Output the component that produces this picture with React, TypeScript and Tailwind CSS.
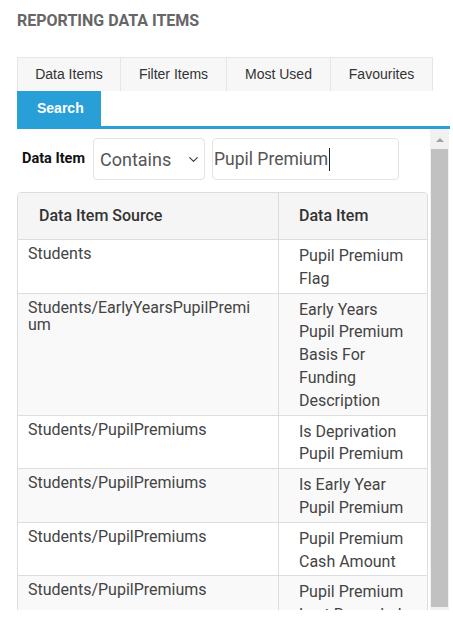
import { ChevronDown } from 'lucide-react'

const tabs = [
  { label: 'Data Items', w: 'w-[104px]' },
  { label: 'Filter Items', w: 'w-[106px]' },
  { label: 'Most Used', w: 'w-[104px]' },
  { label: 'Favourites', w: 'w-[102px]' },
]

const rows = [
  { source: 'Students', item: ['Pupil Premium', 'Flag'] },
  {
    source: 'Students/EarlyYearsPupilPremium',
    item: ['Early Years', 'Pupil Premium', 'Basis For', 'Funding', 'Description'],
  },
  { source: 'Students/PupilPremiums', item: ['Is Deprivation', 'Pupil Premium'] },
  { source: 'Students/PupilPremiums', item: ['Is Early Year', 'Pupil Premium'] },
  { source: 'Students/PupilPremiums', item: ['Pupil Premium', 'Cash Amount'] },
  { source: 'Students/PupilPremiums', item: ['Pupil Premium', 'Last Recorded', 'Date'] },
]

export default function App() {
  return (
    <div className="w-[453px] h-[620px] bg-white overflow-hidden font-['Roboto',sans-serif]">
      <h1 className="pl-[17px] pt-[11px] text-[16px] leading-[19px] font-bold text-[#666666]">
        REPORTING DATA ITEMS
      </h1>

      <div className="ml-[17px] mt-[27px] w-[433px]">
        <div className="flex font-['Liberation_Sans',Arial,sans-serif] text-[14px] text-[#333333]">
          {tabs.map((t, i) => (
            <div
              key={t.label}
              className={`${t.w} h-[34px] flex items-center justify-center bg-[#f7f7f7] border-t border-r border-[#e6e6e6] ${i === 0 ? 'border-l' : ''}`}
            >
              {t.label}
            </div>
          ))}
        </div>
        <div className="flex">
          <div className="w-[84px] h-[35px] bg-[#299fd8] text-white font-bold text-[14px] font-['Liberation_Sans',Arial,sans-serif] flex items-center pl-[20px]">
            Search
          </div>
        </div>
        <div className="h-[3px] bg-[#299fd8]" />

        <div className="flex h-[481px]">
          <div className="w-[413px] overflow-hidden">
            <div className="flex items-center mt-[9px]">
              <span className="pl-[5px] w-[76px] text-[14.5px] font-bold text-[#111111]">Data Item</span>
              <div className="w-[112px] h-[42px] border border-[#e3e3e3] rounded-[4px] flex items-center justify-between pl-[6px] pr-[3px] text-[18px] text-[#555555]">
                <span>Contains</span>
                <ChevronDown size={15} strokeWidth={2} className="text-[#444444]" />
              </div>
              <div className="ml-[7px] w-[187px] h-[42px] border border-[#e3e3e3] rounded-[4px] flex items-center pl-[1px] text-[17.5px] text-[#555555]">
                <span>Pupil Premium</span>
                <span className="ml-[1px] h-[23px] border-l-[1.5px] border-[#222222]" />
              </div>
            </div>

            <div className="mt-[12px] w-[411px] border border-[#dddddd] rounded-t-[4px] overflow-hidden">
              <div className="flex h-[47px] bg-[#f5f5f5] border-b border-[#dddddd] text-[16px] font-medium text-[#333333]">
                <div className="w-[261px] pl-[21px] flex items-center border-r border-[#dddddd]">Data Item Source</div>
                <div className="flex-1 pl-[20px] flex items-center">Data Item</div>
              </div>
              {rows.map((r, i) => (
                <div
                  key={i}
                  className={`flex border-b border-[#dddddd] text-[16px] text-[#444444] ${i % 2 === 1 ? 'bg-[#f9f9f9]' : 'bg-white'}`}
                >
                  <div className="w-[261px] pl-[10px] pr-[26px] pt-[5px] leading-[17px] break-all border-r border-[#dddddd]">
                    {r.source}
                  </div>
                  <div className="flex-1 pl-[20px] pt-[5px] pb-[2px] leading-[22.8px]">
                    {r.item.map((l) => (
                      <div key={l}>{l}</div>
                    ))}
                  </div>
                </div>
              ))}
            </div>
          </div>

          <div className="w-[19px] bg-[#f1f1f1] flex flex-col items-center">
            <div className="mt-[9px] w-0 h-0 border-l-[4px] border-r-[4px] border-b-[4px] border-l-transparent border-r-transparent border-b-[#a3a3a3]" />
            <div className="mt-[7px] w-[17px] h-[458px] bg-[#c1c1c1]" />
          </div>
        </div>
      </div>
    </div>
  )
}
